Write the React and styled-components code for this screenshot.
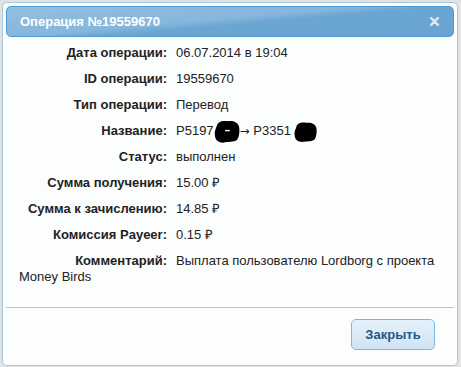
import React from 'react';
import styled, { createGlobalStyle } from 'styled-components';

const GlobalStyle = createGlobalStyle`
    html, body {
        margin: 0;
        padding: 0;
        background: #e2e2e2;
    }
    body {
        padding: 2px;
        font-family: "Liberation Sans", Arial, sans-serif;
        font-size: 13px;
    }
`;

const rows = [
    { label: 'Дата операции:', value: '06.07.2014 в 19:04' },
    { label: 'ID операции:', value: '19559670' },
    { label: 'Тип операции:', value: 'Перевод' },
    { label: 'Название:', value: 'name' },
    { label: 'Статус:', value: 'выполнен' },
    { label: 'Сумма получения:', value: '15.00 ₽' },
    { label: 'Сумма к зачислению:', value: '14.85 ₽' },
    { label: 'Комиссия Payeer:', value: '0.15 ₽' },
    { label: 'Комментарий:', value: 'Выплата пользователю Lordborg с проекта Money Birds' },
];

const Blob = ({ w, h, mark }) => (
    <BlobSvg width={w} height={h} viewBox="0 0 28 24">
        <path
            d="M3 6 C4 1 10 0 15 1 C20 0 26 2 27 7 C28 12 27 18 25 21 C21 24 15 23 10 24 C5 24 1 21 1 16 C0 12 2 9 3 6 Z"
            fill="#000"
        />
        {mark && <path d="M12 11 L17 11" stroke="#fff" strokeWidth="1.5" />}
    </BlobSvg>
);

const Name = () => (
    <>
        P5197<Blob w={26} h={23} mark /><Arrow>→</Arrow> P3351<Blob w={29} h={20} />
    </>
);

const App = () => {
    return (
        <>
            <GlobalStyle />
            <Dialog>
                <TitleBar>
                    <Title>Операция №19559670</Title>
                    <CloseIcon width="9" height="9" viewBox="0 0 9 9">
                        <path d="M1.2 1.2 L7.8 7.8 M7.8 1.2 L1.2 7.8" stroke="#dde8f3" strokeWidth="2.4" strokeLinecap="round" />
                    </CloseIcon>
                </TitleBar>
                <Content>
                    {rows.map((row) => (
                        <Row key={row.label}>
                            <Label>{row.label}</Label>
                            {row.value === 'name' ? <Name /> : row.value}
                        </Row>
                    ))}
                </Content>
                <ButtonPane>
                    <Button>Закрыть</Button>
                </ButtonPane>
            </Dialog>
        </>
    );
};

const Dialog = styled.div`
    width: 448px;
    padding: 3px;
    border: 1px solid #a6c9e2;
    border-radius: 5px;
    background: #fcfdfd;
    color: #222;
`;

const TitleBar = styled.div`
    display: flex;
    align-items: center;
    justify-content: space-between;
    height: 29px;
    padding: 0 14px 0 13px;
    border: 1px solid #4d9bd6;
    border-radius: 5px;
    background: linear-gradient(175deg, #93bfe1 0%, #86b6dc 45%, #6ba6d3 55%, #6aa3d1 100%);
`;

const Title = styled.span`
    color: #fff;
    font-weight: bold;
    font-size: 13px;
`;

const CloseIcon = styled.svg`
    display: block;
`;

const Content = styled.div`
    padding: 8px 12px 0 13px;
`;

const Row = styled.div`
    line-height: 16px;
    margin-bottom: 10px;

    &:last-child {
        margin-bottom: 0;
    }
`;

const Label = styled.span`
    display: inline-block;
    width: 148px;
    margin-right: 9px;
    text-align: right;
    font-weight: bold;
    color: #222;
`;

const BlobSvg = styled.svg`
    display: inline-block;
    vertical-align: middle;
    margin: -8px 0;
`;

const Arrow = styled.span`
    font-family: "DejaVu Sans", sans-serif;
    font-size: 12px;
`;

const ButtonPane = styled.div`
    display: flex;
    justify-content: flex-end;
    margin-top: 22px;
    padding: 11px 19px 12px;
    border-top: 1px solid #a6c9e2;
`;

const Button = styled.button`
    width: 84px;
    height: 31px;
    border: 1px solid #79b7e7;
    border-radius: 5px;
    background: linear-gradient(180deg, #e4f0fb 0%, #dcebf8 50%, #cfe3f4 100%);
    color: #1d5987;
    font-family: "Liberation Sans", Arial, sans-serif;
    font-size: 13px;
    font-weight: bold;
    cursor: pointer;
`;

export default App;
